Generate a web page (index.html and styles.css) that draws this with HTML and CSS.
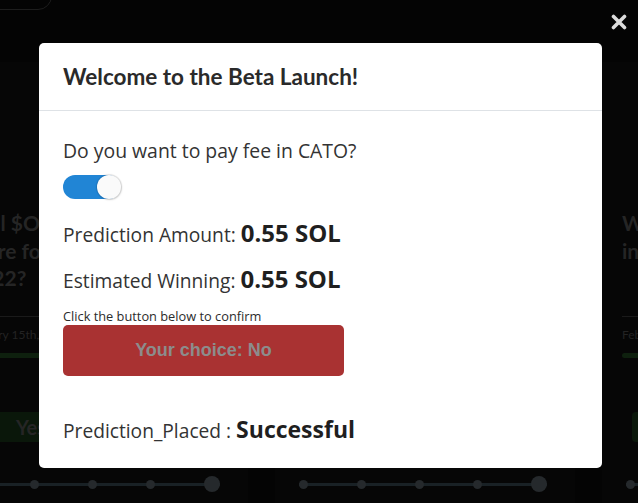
FILE: index.html
```html
<!DOCTYPE html>
<html>
<head>
<meta charset="utf-8">
<link rel="stylesheet" href="styles.css">
</head>
<body>
<div class="page">
  <div class="topbar"><div class="pill"></div></div>
  <div class="cards">
    <div class="card">
      <div class="card-img"><div class="logo"></div></div>
      <div class="card-title">Will $OSMO be<br>more for the<br>2022?</div>
      <div class="card-line"></div>
      <div class="card-date">January 15th, 2022</div>
      <div class="card-bar"></div>
      <div class="card-actions"><span class="card-yes">Yes</span><span class="card-no">No</span></div>
      <div class="slider"><span class="dot"></span><span class="dot"></span><span class="dot"></span><span class="dot"></span><span class="dot big"></span></div>
    </div>
    <div class="card">
      <div class="card-img"></div>
      <div class="card-title">Will $SOL be priced<br>more than $200<br>in 2022?</div>
      <div class="card-line"></div>
      <div class="card-date">January 15th, 2022</div>
      <div class="card-bar"></div>
      <div class="card-actions"><span class="card-yes">Yes</span><span class="card-no">No</span></div>
      <div class="slider"><span class="dot"></span><span class="dot"></span><span class="dot"></span><span class="dot"></span><span class="dot big"></span></div>
    </div>
    <div class="card">
      <div class="card-img"></div>
      <div class="card-title">Will $ATOM be<br>in the top 10</div>
      <div class="card-line"></div>
      <div class="card-date">February 1st, 2022</div>
      <div class="card-bar"></div>
      <div class="card-actions"><span class="card-yes">Yes</span><span class="card-no">No</span></div>
      <div class="slider"><span class="dot"></span><span class="dot"></span><span class="dot"></span><span class="dot"></span><span class="dot big"></span></div>
    </div>
  </div>
</div>

<button class="close" aria-label="Close">
  <svg width="16" height="16" viewBox="0 0 16 16"><path d="M2.5 2.5 L13.5 13.5 M13.5 2.5 L2.5 13.5" stroke="#dcdcdc" stroke-width="3.6" stroke-linecap="round"/></svg>
</button>

<div class="modal">
  <div class="modal-header">
    <h2 class="modal-title">Welcome to the Beta Launch!</h2>
  </div>
  <div class="modal-body">
    <p class="question">Do you want to pay fee in CATO?</p>
    <div class="toggle"><span class="knob"></span></div>
    <p class="stat">Prediction Amount: <b>0.55 SOL</b></p>
    <p class="stat stat2">Estimated Winning: <b>0.55 SOL</b></p>
    <p class="hint">Click the button below to confirm</p>
    <button class="choice">Your choice: No</button>
    <p class="stat placed">Prediction_Placed : <b>Successful</b></p>
  </div>
</div>
</body>
</html>
```
FILE: styles.css
```css
html, body {
  margin: 0;
  padding: 0;
}
body {
  width: 638px;
  height: 503px;
  overflow: hidden;
  background: #040404;
  font-family: "Open Sans", "Noto Sans", sans-serif;
  position: relative;
}
.page {
  display: flex;
  flex-direction: column;
}
.topbar {
  height: 62px;
}
.pill {
  width: 180px;
  height: 40px;
  margin: -32px 0 0 -130px;
  border: 1px solid #1d1d1d;
  border-radius: 14px;
}
.cards {
  display: flex;
  gap: 27px;
  margin-left: -52px;
}
.card {
  flex: 0 0 300px;
  background: #060606;
  padding: 0 20px;
  box-sizing: border-box;
  height: 460px;
  display: flex;
  flex-direction: column;
}
.card-img {
  height: 147px;
  display: flex;
  align-items: center;
  justify-content: flex-end;
}
.logo {
  width: 40px;
  height: 60px;
  border-radius: 50% 0 0 50%;
  border: 2px solid #121212;
  border-right: 0;
  margin-right: -10px;
}
.card-title {
  font-family: "Lato", sans-serif;
  font-weight: 700;
  font-size: 21px;
  line-height: 27.5px;
  height: 83px;
  color: #252525;
  white-space: nowrap;
}
.card-line {
  height: 1px;
  background: #1a1a1a;
  margin: 24px -20px 0 0;
}
.card-date {
  margin-top: 10px;
  font-size: 12px;
  line-height: 16px;
  color: #232323;
  font-family: "Lato", sans-serif;
}
.card-bar {
  height: 5px;
  margin-top: 10px;
  border-radius: 3px;
  background: #0e200e;
}
.card-actions {
  margin: 54px 10px 0;
  display: flex;
  gap: 8px;
}
.card-yes, .card-no {
  flex: 0 0 106px;
  height: 30px;
  border-radius: 4px;
  font-family: "Lato", sans-serif;
  font-weight: 700;
  font-size: 20px;
  line-height: 30px;
  text-align: center;
  color: #252525;
}
.card-yes {
  background: #0a170a;
}
.card-no {
  background: #170a0a;
}
.slider {
  margin: 34px 8px 0 4px;
  height: 16px;
  display: flex;
  align-items: center;
  justify-content: space-between;
  background: linear-gradient(#192125, #192125) center / 100% 3px no-repeat;
}
.dot {
  width: 9px;
  height: 9px;
  border-radius: 50%;
  background: #25292c;
}
.dot.big {
  width: 16px;
  height: 16px;
}

.close {
  position: absolute;
  right: 11px;
  top: 14px;
  width: 16px;
  height: 16px;
  padding: 0;
  border: 0;
  background: none;
  display: flex;
}

.modal {
  position: absolute;
  left: 39px;
  top: 43px;
  width: 563px;
  height: 425px;
  background: #fff;
  border-radius: 5px;
  display: flex;
  flex-direction: column;
}
.modal-header {
  height: 68px;
  border-bottom: 1px solid #dee2e6;
  display: flex;
  align-items: center;
  padding: 0 24px;
  box-sizing: border-box;
}
.modal-title {
  margin: 0;
  font-family: "Lato", sans-serif;
  font-weight: 700;
  font-size: 22.5px;
  color: #2a2a2a;
}
.modal-body {
  padding: 26px 24px 0;
  display: flex;
  flex-direction: column;
  align-items: flex-start;
  color: #2b2b2b;
}
.question {
  margin: 0;
  font-size: 19.4px;
  line-height: 28px;
  color: #333;
}
.toggle {
  margin-top: 10px;
  width: 57px;
  height: 24px;
  border-radius: 12px;
  background: #2185d5;
  position: relative;
}
.knob {
  position: absolute;
  right: -1px;
  top: -0.5px;
  width: 24px;
  height: 24px;
  border-radius: 50%;
  background: #fafafa;
  box-shadow: 0 0 1px 1px rgba(0,0,0,0.12), 1px 1px 2px rgba(0,0,0,0.1);
}
.stat {
  margin: 20px 0 0;
  font-size: 19.2px;
  line-height: 32px;
  color: #333;
}
.stat b {
  font-size: 24px;
  line-height: 1;
  font-weight: 700;
  color: #1f1f1f;
}
.stat2 {
  margin-top: 14px;
}
.hint {
  margin: 11px 0 0;
  font-size: 12.8px;
  line-height: 16px;
  color: #2b2b2b;
}
.choice {
  margin-top: 1px;
  width: 281px;
  height: 51px;
  border: 0;
  border-radius: 5px;
  background: #a93232;
  color: #8c8c8c;
  font-family: "Liberation Sans", Arial, sans-serif;
  font-weight: 700;
  font-size: 18px;
}
.placed {
  margin-top: 39px;
}
.placed b {
  font-size: 23px;
}
```
